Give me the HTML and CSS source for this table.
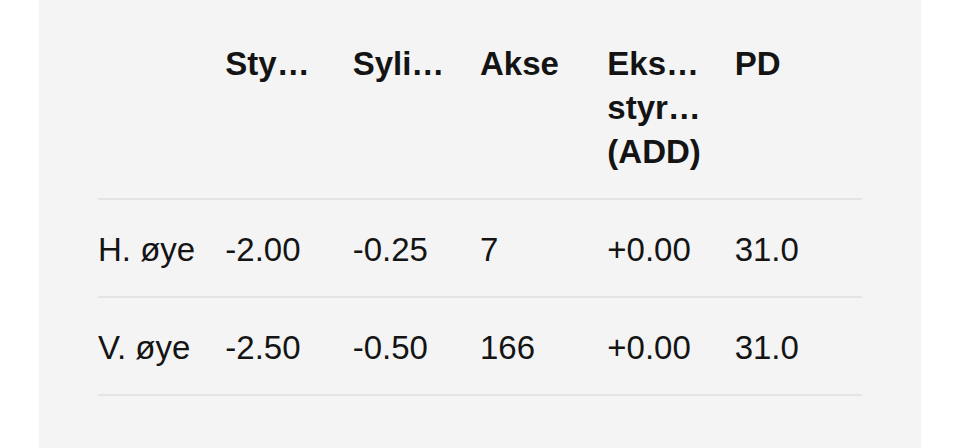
FILE: index.html
```html
<!DOCTYPE html>
<html lang="no">
<head>
<meta charset="utf-8">
<title>Resept</title>
<link rel="stylesheet" href="styles.css">
</head>
<body>
<main class="panel">
  <table class="rx">
    <thead>
      <tr>
        <th></th>
        <th title="Styrke">Sty…</th>
        <th title="Sylinder">Syli…</th>
        <th>Akse</th>
        <th title="Ekstra styrke (ADD)"><span class="ln">Eks…</span><span class="ln">styr…</span><span class="ln">(ADD)</span></th>
        <th>PD</th>
      </tr>
    </thead>
    <tbody>
      <tr>
        <td>H. øye</td>
        <td>-2.00</td>
        <td>-0.25</td>
        <td>7</td>
        <td>+0.00</td>
        <td>31.0</td>
      </tr>
      <tr>
        <td>V. øye</td>
        <td>-2.50</td>
        <td>-0.50</td>
        <td>166</td>
        <td>+0.00</td>
        <td>31.0</td>
      </tr>
    </tbody>
  </table>
</main>
</body>
</html>
```

FILE: styles.css
```css
html, body {
  margin: 0;
  padding: 0;
  background: #ffffff;
}

body {
  font-family: "Liberation Sans", Arial, sans-serif;
  color: #141414;
}

.panel {
  margin-left: 39px;
  width: 882px;
  height: 448px;
  background: #f4f4f4;
  padding-left: 59px;
  box-sizing: border-box;
  overflow: hidden;
}

.rx {
  width: 764px;
  table-layout: fixed;
  border-collapse: collapse;
  font-size: 33px;
  line-height: 44px;
}

.rx th {
  text-align: left;
  font-weight: 700;
  vertical-align: top;
  padding: 42px 0 24px 0;
  border-bottom: 2px solid #e4e4e4;
  white-space: nowrap;
}

.rx .ln {
  display: block;
}

.rx td {
  padding: 28px 0 24px 0;
  border-bottom: 2px solid #e4e4e4;
  white-space: nowrap;
  font-weight: 400;
}
```
